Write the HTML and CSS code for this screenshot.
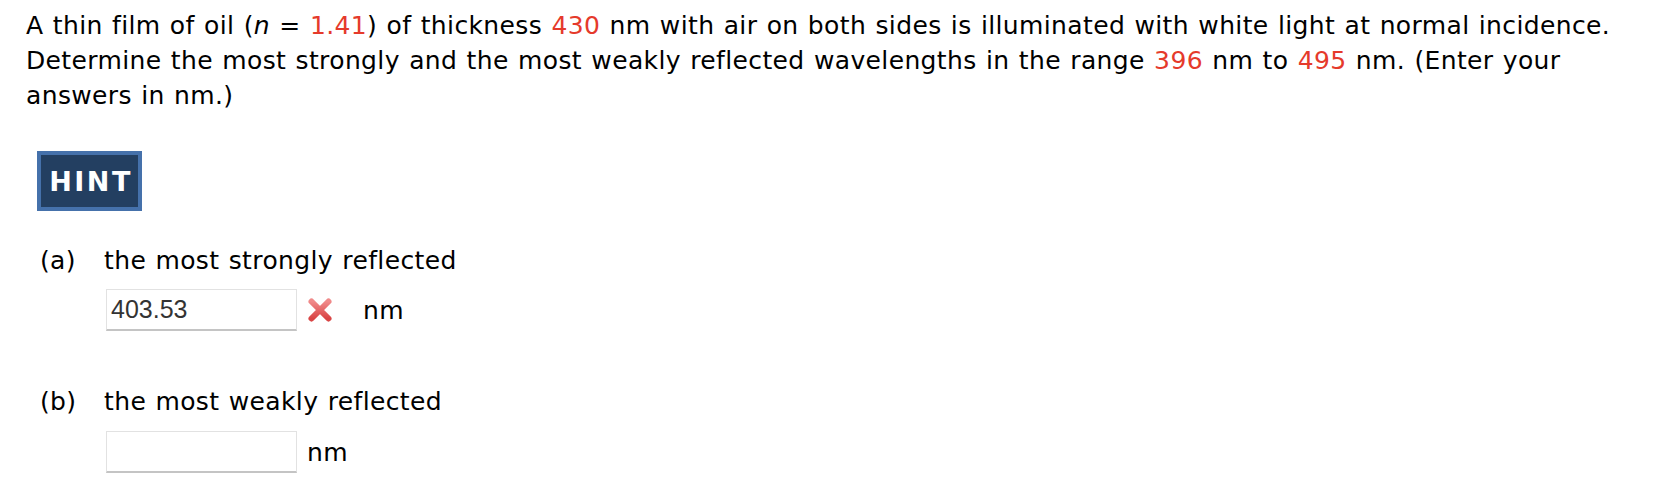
FILE: index.html
```html
<!DOCTYPE html>
<html>
<head>
<meta charset="utf-8">
<link rel="stylesheet" href="styles.css">
</head>
<body>
<div class="page">
  <p class="problem">A thin film of oil (<i>n</i> = <span class="num">1.41</span>) of thickness <span class="num">430</span> nm with air on both sides is illuminated with white light at normal incidence. Determine the most strongly and the most weakly reflected wavelengths in the range <span class="num">396</span> nm to <span class="num">495</span> nm. (Enter your answers in nm.)</p>

  <div class="hint-row"><button class="hint">HINT</button></div>

  <div class="part part-a">
    <div class="part-label"><span class="letter">(a)</span><span class="desc">the most strongly reflected</span></div>
    <div class="answer">
      <div class="field">403.53</div>
      <svg class="wrong" width="26" height="26" viewBox="0 0 26 26">
        <defs>
          <linearGradient id="rg" x1="0" y1="0" x2="0" y2="1">
            <stop offset="0" stop-color="#f08a8a"/>
            <stop offset="1" stop-color="#d94545"/>
          </linearGradient>
        </defs>
        <path d="M4.5 4.5 L21.5 21.5 M21.5 4.5 L4.5 21.5" stroke="url(#rg)" stroke-width="6" stroke-linecap="round"/>
      </svg>
      <span class="unit unit-after-icon">nm</span>
    </div>
  </div>

  <div class="part part-b">
    <div class="part-label"><span class="letter">(b)</span><span class="desc">the most weakly reflected</span></div>
    <div class="answer">
      <div class="field"></div>
      <span class="unit">nm</span>
    </div>
  </div>
</div>
</body>
</html>
```

FILE: styles.css
```css
html, body {
  margin: 0;
  padding: 0;
  background: #ffffff;
}

.page {
  padding: 8px 0 0 26px;
  font-family: "DejaVu Sans", Verdana, sans-serif;
  font-size: 25px;
  letter-spacing: 0.37px;
  word-spacing: 1px;
  line-height: 35px;
  color: #000000;
}

.problem {
  margin: 0;
  width: 1620px;
}

.problem i {
  font-style: italic;
}

.num {
  color: #e53a2b;
}

.hint-row {
  margin-top: 38px;
  padding-left: 11px;
}

.hint {
  display: flex;
  align-items: center;
  justify-content: center;
  width: 105px;
  height: 60px;
  box-sizing: border-box;
  border: 4px solid #4571ab;
  background: #233f61;
  color: #ffffff;
  font-family: "DejaVu Sans", Verdana, sans-serif;
  font-weight: bold;
  font-size: 27px;
  letter-spacing: 2.5px;
  padding: 0 0 0 3px;
  margin: 0;
}

.part {
  padding-left: 14px;
}

.part-a {
  margin-top: 32px;
}

.part-b {
  margin-top: 53px;
}

.part-label {
  display: flex;
}

.letter {
  width: 64px;
}

.answer {
  display: flex;
  align-items: center;
  margin-left: 66px;
  margin-top: 11px;
}

.part-b .answer {
  margin-top: 12px;
}

.field {
  width: 191px;
  height: 42px;
  box-sizing: border-box;
  border: 1px solid #e2e2e2;
  border-bottom: 2px solid #c4c4c4;
  padding-left: 4px;
  font-family: "Liberation Sans", Arial, sans-serif;
  font-size: 25px;
  letter-spacing: 0;
  word-spacing: 0;
  line-height: 38px;
  color: #333333;
  background: #ffffff;
}

.wrong {
  margin-left: 10px;
  display: block;
}

.unit {
  margin-left: 10px;
}

.unit-after-icon {
  margin-left: 30px;
}
```
